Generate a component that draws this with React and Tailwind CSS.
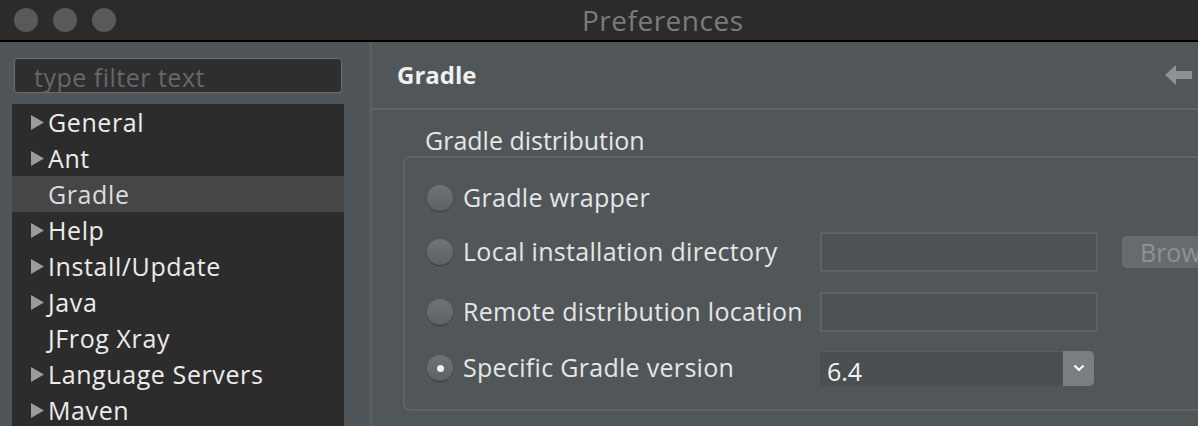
import React from 'react';

const tree = [
  { label: 'General', arrow: true },
  { label: 'Ant', arrow: true },
  { label: 'Gradle', arrow: false, selected: true },
  { label: 'Help', arrow: true },
  { label: 'Install/Update', arrow: true },
  { label: 'Java', arrow: true },
  { label: 'JFrog Xray', arrow: false },
  { label: 'Language Servers', arrow: true },
  { label: 'Maven', arrow: true },
];

const Radio = ({ checked }) => (
  <span className="w-[26px] h-[26px] rounded-full bg-gradient-to-b from-[#707477] to-[#5d6164] shadow-[0_1px_1px_rgba(0,0,0,0.35)] flex items-center justify-center shrink-0">
    {checked && <span className="w-[7px] h-[7px] rounded-full bg-[#f2f2f2]" />}
  </span>
);

const Field = () => (
  <div className="w-[278px] h-[40px] bg-[#4e5255] border-2 border-[#5d6265] shrink-0" />
);

export default function App() {
  return (
    <div className="w-[1198px] h-[426px] overflow-hidden bg-[#515659] font-['Open_Sans',sans-serif]">
      {/* title bar */}
      <div className="h-[42px] bg-[#2b2b2b] border-b-2 border-black flex items-center pl-[14px]">
        <div className="flex gap-[15px] items-center">
          <span className="w-[24px] h-[24px] rounded-full bg-[#595959]" />
          <span className="w-[24px] h-[24px] rounded-full bg-[#595959]" />
          <span className="w-[24px] h-[24px] rounded-full bg-[#595959]" />
        </div>
        <span className="ml-[466px] text-[28px] tracking-[0.5px] leading-none text-[#7b7b7b] whitespace-nowrap">Preferences</span>
      </div>

      <div className="flex h-[384px]">
        {/* left side */}
        <div className="w-[372px] bg-[#505559] border-r-2 border-[#5c6164] pt-[16px] shrink-0">
          <div className="ml-[14px] w-[328px] h-[35px] bg-[#2e2e2e] border border-[#6a6e71] rounded-[4px] flex items-center pl-[19px] pt-[3px]">
            <span className="text-[25px] tracking-[0.5px] text-[#676767] leading-none whitespace-nowrap">type filter text</span>
          </div>
          <div className="ml-[12px] mt-[11px] w-[332px] bg-[#2c2c2c] h-[330px]">
            {tree.map((t) => (
              <div
                key={t.label}
                className={`h-[36px] flex items-center ${t.selected ? 'bg-[#464646]' : ''}`}
              >
                <span className="w-[36px] flex justify-end pr-[4px]">
                  {t.arrow && (
                    <svg width="13" height="15" viewBox="0 0 13 15">
                      <path d="M0 0 L13 7.5 L0 15 Z" fill="#9c9c9c" />
                    </svg>
                  )}
                </span>
                <span className={`text-[25px] tracking-[0.6px] leading-none whitespace-nowrap ${t.selected ? 'text-[#dcdcdc]' : 'text-[#ececec]'}`}>{t.label}</span>
              </div>
            ))}
          </div>
        </div>

        {/* right side */}
        <div className="flex-1 min-w-0 overflow-hidden">
          <div className="h-[68px] border-b-2 border-[#606568] flex items-center pl-[25px] pr-[4px]">
            <span className="text-[24px] font-bold text-[#f0f0f0] leading-none">Gradle</span>
            <svg className="ml-auto" width="30" height="24" viewBox="0 0 30 24">
              <path d="M1 12 L12 2 L12 8 L28 8 L28 16 L12 16 L12 22 Z" fill="#8e9295" />
            </svg>
          </div>

          <div className="pl-[31px] pt-[18px]">
            <div className="pl-[22px] text-[25px] leading-none text-[#e6e6e6] h-[28px] whitespace-nowrap">Gradle distribution</div>
            <div className="w-[900px] h-[255px] border-2 border-[#5f6467] rounded-[7px] pl-[22px] pt-[20px]">
              <div className="flex items-center h-[40px]">
                <div className="w-[393px] flex items-center gap-[10px]">
                  <Radio />
                  <span className="text-[25px] tracking-[0.3px] text-[#e6e6e6] whitespace-nowrap">Gradle wrapper</span>
                </div>
              </div>
              <div className="flex items-center h-[40px] mt-[14px]">
                <div className="w-[393px] flex items-center gap-[10px] shrink-0">
                  <Radio />
                  <span className="text-[25px] tracking-[0.3px] text-[#e6e6e6] whitespace-nowrap">Local installation directory</span>
                </div>
                <Field />
                <div className="ml-[24px] h-[32px] pl-[18px] pr-[8px] bg-[#676b6e] rounded-[5px] flex items-center shrink-0">
                  <span className="text-[25px] text-[#8e9295] leading-none whitespace-nowrap">Browse...</span>
                </div>
              </div>
              <div className="flex items-center h-[40px] mt-[20px]">
                <div className="w-[393px] flex items-center gap-[10px] shrink-0">
                  <Radio />
                  <span className="text-[25px] tracking-[0.3px] text-[#e6e6e6] whitespace-nowrap">Remote distribution location</span>
                </div>
                <Field />
              </div>
              <div className="flex items-center h-[40px] mt-[16px]">
                <div className="w-[393px] flex items-center gap-[10px] shrink-0">
                  <Radio checked />
                  <span className="text-[25px] tracking-[0.3px] text-[#e6e6e6] whitespace-nowrap">Specific Gradle version</span>
                </div>
                <div className="w-[274px] h-[35px] flex shrink-0">
                  <div className="flex-1 bg-[#4b4f52] border-t border-[#5a5e61] flex items-center pl-[7px] pt-[6px]">
                    <span className="text-[25px] text-[#f4f4f4] leading-none">6.4</span>
                  </div>
                  <div className="w-[31px] bg-[#7b7f82] rounded-r-[5px] flex items-center justify-center">
                    <svg width="12" height="8" viewBox="0 0 12 8">
                      <path d="M1.5 1.5 L6 6 L10.5 1.5" fill="none" stroke="#ffffff" strokeWidth="2" />
                    </svg>
                  </div>
                </div>
              </div>
            </div>
          </div>
        </div>
      </div>
    </div>
  );
}
